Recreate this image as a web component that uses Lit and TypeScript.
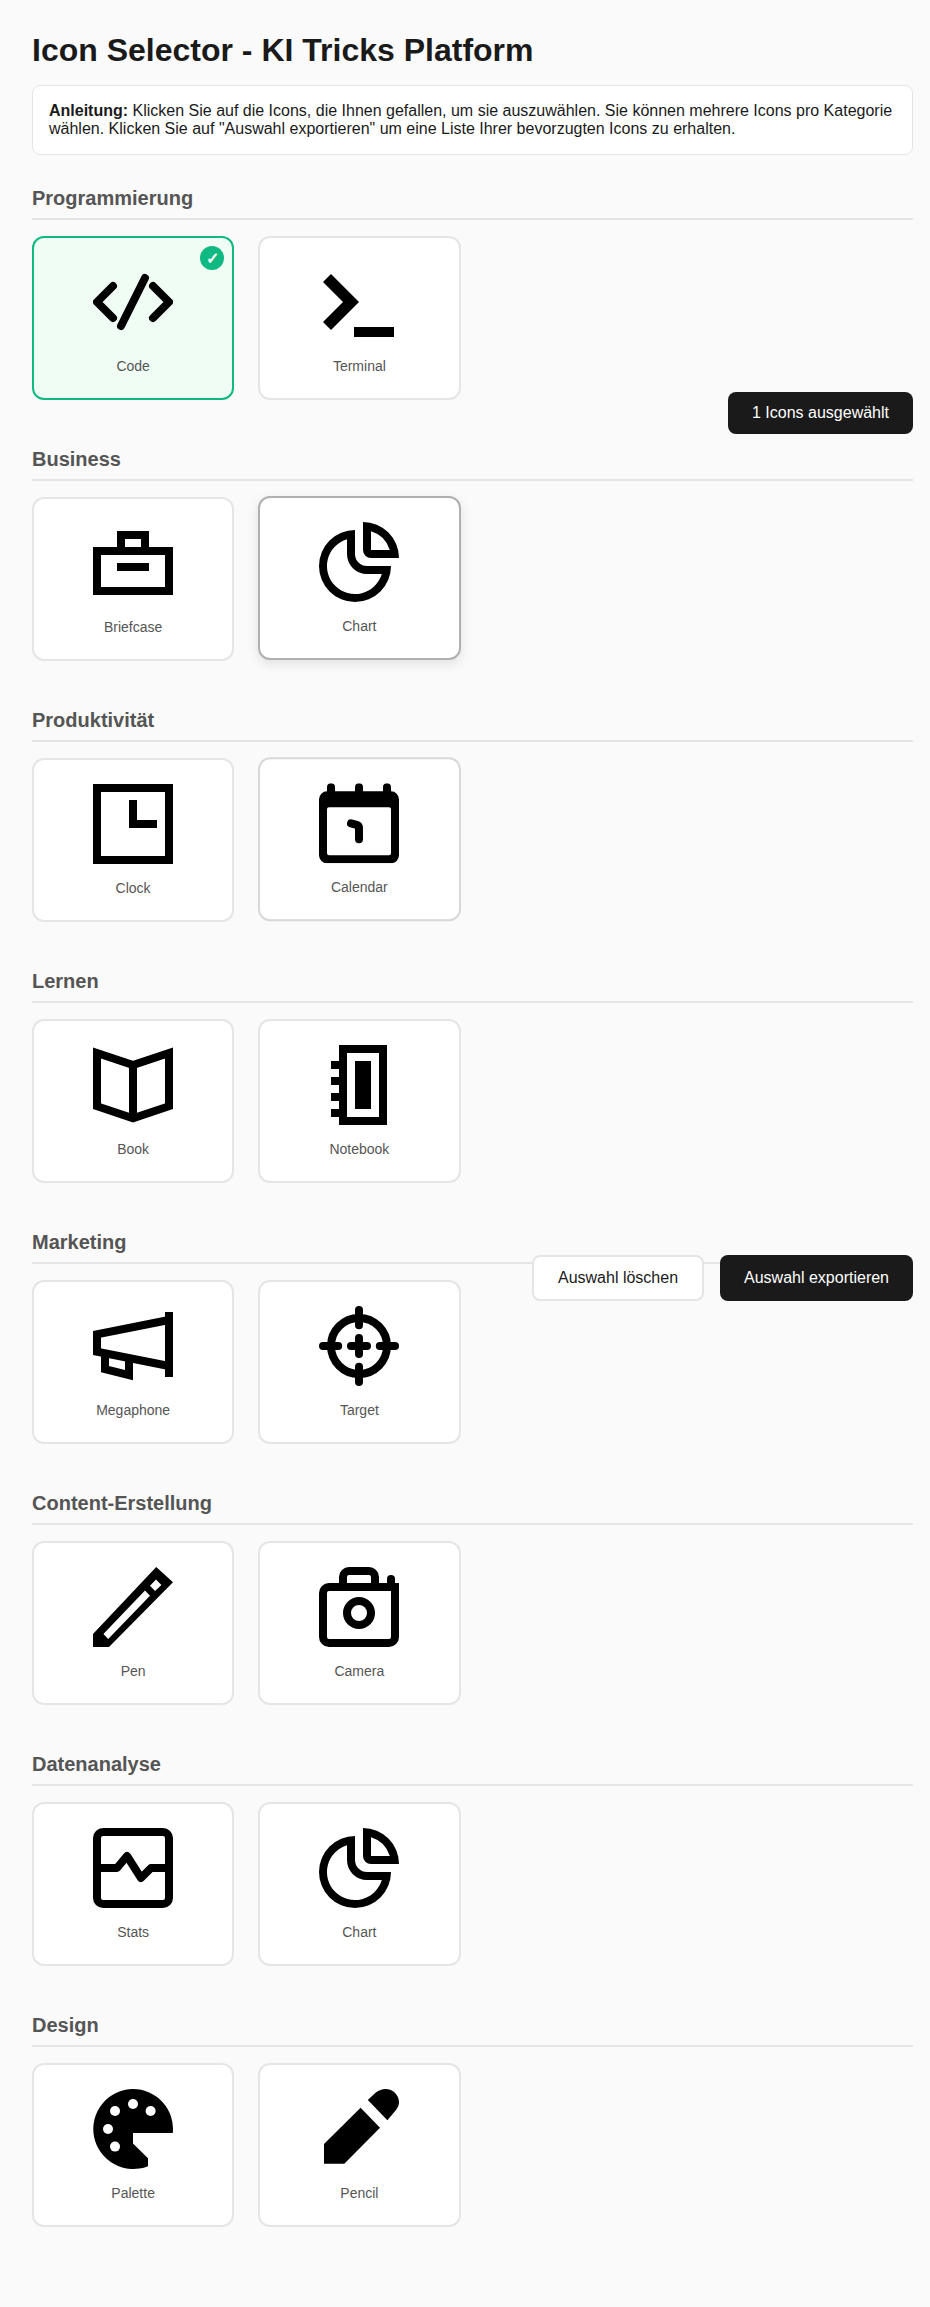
import { LitElement, html, css, svg } from 'lit'
import { customElement, state } from 'lit/decorators.js'

// icons are all drawn on a 20 unit grid, shown at 80px
const stroke = (body: unknown) => html`<svg class="icon" viewBox="0 0 20 20" fill="none" stroke="#000" stroke-width="2">${body}</svg>`
const solid = (body: unknown) => html`<svg class="icon" viewBox="0 0 20 20" fill="#000" fill-rule="evenodd">${body}</svg>`

const chartIcon = solid(svg`
	<path d="M9 2A9 9 0 1 0 18 11H12A3 3 0 0 1 9 8ZM7 4.3A7 7 0 1 0 15.7 13H12A5 5 0 0 1 7 8Z" />
	<path d="M11 0A9 9 0 0 1 20 9H13A2 2 0 0 1 11 7ZM13 2.3A7 7 0 0 1 17.7 7H13Z" />
`)

const ICONS: Record<string, unknown> = {
	code: stroke(svg`<path stroke-linecap="round" stroke-linejoin="round" d="M5 6L1 10L5 14M15 6L19 10L15 14M13 4L7 16" />`),
	terminal: solid(svg`<path d="M3 3L10 10L3 17L1 15L6 10L1 5Z" /><rect x="8.75" y="16.25" width="10" height="2.5" />`),
	briefcase: stroke(svg`<rect x="1" y="7" width="18" height="10" /><path d="M7 7V3H13V7M6 11H14" />`),
	chart: chartIcon,
	clock: stroke(svg`<rect x="1" y="1" width="18" height="18" /><path d="M10 4V10H16" />`),
	calendar: html`<svg class="icon" viewBox="0 0 20 20" fill="none" stroke="#000" stroke-width="2" stroke-linecap="round">
		<path fill="#000" stroke="none" fill-rule="evenodd" d="M2 2H18A2 2 0 0 1 20 4V18A2 2 0 0 1 18 20H2A2 2 0 0 1 0 18V4A2 2 0 0 1 2 2ZM2.5 6A.5 .5 0 0 0 2 6.5V17.5A.5 .5 0 0 0 2.500 18H17.500A.5 .5 0 0 0 18 17.500V6.500A.5 .5 0 0 0 17.500 6Z" />
		<path d="M3 1V4M10 1V4M17 1V4M8 10L9.400 10.400Q10 10.600 10 11.200V14" />
	</svg>`,
	book: stroke(svg`<path d="M1 2L10 5L19 2V15.300L10 18.300L1 15.300ZM10 5V18.300" />`),
	notebook: stroke(svg`
		<rect x="6" y="1" width="10" height="18" />
		<rect x="9" y="4" width="4" height="12" fill="#000" stroke="none" />
		<path d="M3 5H5M3 9H5M3 13H5M3 17H5" />
	`),
	megaphone: stroke(svg`<path d="M19 1.500V17.750M19 3.500L1 7.100V11.400L19 15M3 12V15.800L9 17.300V13.400" />`),
	target: stroke(svg`
		<circle cx="10" cy="10" r="7" />
		<path stroke-linecap="round" d="M10 1V4.800M10 15.200V19M1 10H4.800M15.200 10H19M8 10H12M10 8V12" />
	`),
	pen: solid(svg`<path d="M0 16.750L15.800 0L20 3.800L4 20H0ZM2.600 16.750L3.800 18L14.250 7.200L13 5.900ZM14.250 4.700L15.500 6L17.100 4.500L15.750 3.100Z" />`),
	camera: stroke(svg`
		<path d="M2.500 5H19V17.500A1.500 1.500 0 0 1 17.500 19H2.500A1.500 1.500 0 0 1 1 17.500V6.500A1.500 1.500 0 0 1 2.500 5Z" />
		<path d="M6 5V2.500A1.500 1.500 0 0 1 7.500 1H12.500A1.500 1.500 0 0 1 14 2.500V5" />
		<path stroke-linecap="round" d="M18 3V5" />
		<path d="M18 5H20" />
		<circle cx="10" cy="11.500" r="3" />
	`),
	stats: stroke(svg`
		<rect x="1" y="1" width="18" height="18" rx="1.500" />
		<path stroke-linejoin="round" d="M1 10H6L8.500 7L12 12.500L14.500 10H19" />
	`),
	palette: html`<svg class="icon" viewBox="0 0 20 20" fill="#000">
		<path d="M10 0A10 10 0 1 0 13.750 19.300V17.300L10 13.600V11H19.950A10 10 0 0 0 10 0Z" />
		<g fill="#fff">
			<circle cx="10" cy="3.750" r="1.250" />
			<circle cx="14.400" cy="5.500" r="1.250" />
			<circle cx="5.500" cy="5.500" r="1.250" />
			<circle cx="3.750" cy="10" r="1.250" />
			<circle cx="5.500" cy="14.400" r="1.250" />
		</g>
	</svg>`,
	pencil: solid(svg`
		<path d="M1.250 13.750L10.400 4.670L15.250 9.670L6.330 18.670H1.250Z" />
		<path d="M12.200 2.750L14.200 .900C15 .300 15.800 0 16.600 0C18.500 0 20 1.500 20 3.400C20 4 19.700 4.700 19.200 5.300L17.100 7.800Z" />
	`),
}

type Item = { id: string; icon: string; name: string; look?: string }

const SECTIONS: { title: string; items: Item[] }[] = [
	{ title: 'Programmierung', items: [
		{ id: 'code', icon: 'code', name: 'Code' },
		{ id: 'terminal', icon: 'terminal', name: 'Terminal' },
	] },
	{ title: 'Business', items: [
		{ id: 'briefcase', icon: 'briefcase', name: 'Briefcase' },
		{ id: 'chart-b', icon: 'chart', name: 'Chart', look: 'hovered' },
	] },
	{ title: 'Produktivität', items: [
		{ id: 'clock', icon: 'clock', name: 'Clock' },
		{ id: 'calendar', icon: 'calendar', name: 'Calendar', look: 'leaving' },
	] },
	{ title: 'Lernen', items: [
		{ id: 'book', icon: 'book', name: 'Book' },
		{ id: 'notebook', icon: 'notebook', name: 'Notebook' },
	] },
	{ title: 'Marketing', items: [
		{ id: 'megaphone', icon: 'megaphone', name: 'Megaphone' },
		{ id: 'target', icon: 'target', name: 'Target' },
	] },
	{ title: 'Content-Erstellung', items: [
		{ id: 'pen', icon: 'pen', name: 'Pen' },
		{ id: 'camera', icon: 'camera', name: 'Camera' },
	] },
	{ title: 'Datenanalyse', items: [
		{ id: 'stats', icon: 'stats', name: 'Stats' },
		{ id: 'chart-d', icon: 'chart', name: 'Chart' },
	] },
	{ title: 'Design', items: [
		{ id: 'palette', icon: 'palette', name: 'Palette' },
		{ id: 'pencil', icon: 'pencil', name: 'Pencil' },
	] },
]

@customElement('app-root')
export class AppRoot extends LitElement {
	@state() selected = new Set<string>(['code'])

	static styles = css`
		:host {
			display: block;
			position: relative;
			box-sizing: border-box;
			width: 930px;
			padding: 32px 17px 32px 32px;
			background: #fafafa;
			color: #1a1a1a;
			font-family: 'Liberation Sans', Arial, sans-serif;
		}
		h1 {
			margin: 0 0 16px;
			font-size: 32px;
			font-weight: 700;
		}
		.intro {
			margin-bottom: 32px;
			padding: 16px;
			background: #fff;
			border: 1px solid #e5e5e5;
			border-radius: 8px;
			font-size: 16px;
			color: #1a1a1a;
		}
		.section {
			margin-bottom: 48px;
		}
		h2 {
			margin: 0 0 16px;
			padding-bottom: 8px;
			border-bottom: 2px solid #e5e5e5;
			font-size: 20px;
			font-weight: 700;
			color: #555;
		}
		.grid {
			display: grid;
			grid-template-columns: repeat(4, 1fr);
			gap: 24px;
		}
		.card {
			position: relative;
			display: flex;
			flex-direction: column;
			align-items: center;
			padding: 24px;
			background: #fff;
			border: 2px solid #e5e5e5;
			border-radius: 12px;
			cursor: pointer;
		}
		.card.selected {
			background: #f0fdf4;
			border-color: #10b981;
		}
		.card.hovered {
			border-color: #b0b0b0;
			box-shadow: 0 4px 12px rgba(0, 0, 0, 0.1);
			transform: translateY(-1px);
		}
		.card.leaving {
			border-color: #d8d8d8;
			transform: translateY(-0.7px);
		}
		.icon {
			display: block;
			width: 80px;
			height: 80px;
		}
		.name {
			margin-top: 16px;
			font-size: 14px;
			color: #555;
			text-align: center;
		}
		.check {
			position: absolute;
			top: 8px;
			right: 8px;
			width: 24px;
			height: 24px;
			display: flex;
			align-items: center;
			justify-content: center;
			border-radius: 50%;
			background: #10b981;
			color: #fff;
			font-size: 16px;
			font-weight: 700;
		}
		.counter {
			position: absolute;
			top: 392px;
			right: 17px;
			padding: 12px 24px;
			background: #1a1a1a;
			border-radius: 8px;
			color: #fff;
			font-size: 16px;
		}
		.actions {
			position: absolute;
			top: 1255px;
			right: 17px;
			display: flex;
			gap: 16px;
		}
		button {
			padding: 12px 24px;
			border: none;
			border-radius: 8px;
			background: #1a1a1a;
			color: #fff;
			font-family: inherit;
			font-size: 16px;
			cursor: pointer;
		}
		button.ghost {
			background: #fff;
			border: 2px solid #e5e5e5;
			color: #1a1a1a;
		}
	`

	_toggle(id: string) {
		const next = new Set(this.selected)
		if (next.has(id)) next.delete(id)
		else next.add(id)
		this.selected = next
	}

	_card(item: Item) {
		const on = this.selected.has(item.id)
		return html`
			<div class="card ${on ? 'selected' : ''} ${item.look ?? ''}" @click=${() => this._toggle(item.id)}>
				${on ? html`<div class="check">✓</div>` : ''}
				${ICONS[item.icon]}
				<div class="name">${item.name}</div>
			</div>
		`
	}

	render() {
		return html`
			<h1>Icon Selector - KI Tricks Platform</h1>
			<div class="intro">
				<strong>Anleitung:</strong> Klicken Sie auf die Icons, die Ihnen gefallen, um sie auszuwählen. Sie können mehrere Icons pro Kategorie wählen. Klicken Sie auf "Auswahl exportieren" um eine Liste Ihrer bevorzugten Icons zu erhalten.
			</div>
			${SECTIONS.map(
				(s) => html`
					<div class="section">
						<h2>${s.title}</h2>
						<div class="grid">${s.items.map((i) => this._card(i))}</div>
					</div>
				`,
			)}
			<div class="counter">${this.selected.size} Icons ausgewählt</div>
			<div class="actions">
				<button class="ghost" @click=${() => (this.selected = new Set())}>Auswahl löschen</button>
				<button>Auswahl exportieren</button>
			</div>
		`
	}
}
